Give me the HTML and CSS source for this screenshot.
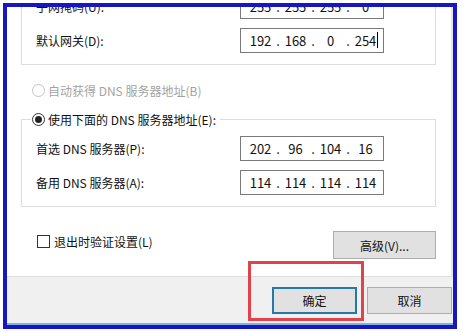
FILE: index.html
```html
<!DOCTYPE html>
<html>
  <head>
    <title>Internet 协议版本 4 (TCP/IPv4) 属性</title>
    <link rel="stylesheet" href="styles.css">
  </head>
  <body>
    <div class="frame">
      <div class="content">
        <!-- manual IP group, top is scrolled out of view -->
        <div class="group top-group">
          <div class="row">
            <span class="label">子网掩码(U):</span>
            <div class="ip-box">
              <span class="seg">255</span><span class="dot">.</span>
              <span class="seg">255</span><span class="dot">.</span>
              <span class="seg">255</span><span class="dot">.</span>
              <span class="seg">0</span>
            </div>
          </div>
          <div class="row">
            <span class="label">默认网关(D):</span>
            <div class="ip-box">
              <span class="seg">192</span><span class="dot">.</span>
              <span class="seg">168</span><span class="dot">.</span>
              <span class="seg">0</span><span class="dot">.</span>
              <span class="seg">254<i class="caret"></i></span>
            </div>
          </div>
        </div>

        <div class="radio-row disabled">
          <span class="radio"></span>
          <span>自动获得 DNS 服务器地址(B)</span>
        </div>

        <fieldset class="group dns-group">
          <legend class="radio-row">
            <span class="radio checked"></span>
            <span>使用下面的 DNS 服务器地址(E):</span>
          </legend>
          <div class="row">
            <span class="label">首选 DNS 服务器(P):</span>
            <div class="ip-box">
              <span class="seg">202</span><span class="dot">.</span>
              <span class="seg">96</span><span class="dot">.</span>
              <span class="seg">104</span><span class="dot">.</span>
              <span class="seg">16</span>
            </div>
          </div>
          <div class="row">
            <span class="label">备用 DNS 服务器(A):</span>
            <div class="ip-box">
              <span class="seg">114</span><span class="dot">.</span>
              <span class="seg">114</span><span class="dot">.</span>
              <span class="seg">114</span><span class="dot">.</span>
              <span class="seg">114</span>
            </div>
          </div>
        </fieldset>

        <div class="options">
          <label class="check-row">
            <span class="checkbox"></span>
            <span>退出时验证设置(L)</span>
          </label>
          <button class="btn btn-advanced">高级(V)...</button>
        </div>
      </div>

      <div class="footer">
        <button class="btn btn-ok">确定</button>
        <button class="btn">取消</button>
      </div>

      <!-- red highlight drawn over the OK button -->
      <div class="highlight"></div>
    </div>
  </body>
</html>
```

FILE: styles.css
```css
  * {
    box-sizing: border-box;
  }

  body {
    margin: 0;
    background: #fff;
    font-family: "Noto Sans CJK SC", "Microsoft YaHei", sans-serif;
    font-size: 12px;
    color: #111;
  }

  /* Blue frame around the dialog */
  .frame {
    position: relative;
    margin: 3px 0 0 3px;
    width: 454px;
    height: 326px;
    border: 4px solid #1616c2;
    overflow: hidden;
    display: flex;
    flex-direction: column;
  }

  .content {
    height: 269px;
    padding: 0 15px 0 14px;
    background: #fff;
    border-right: 2px solid #e6e6e6;
  }

  /* Group boxes */
  .group {
    border: 1px solid #dcdcdc;
  }

  .top-group {
    margin-top: -30px;
    padding: 16px 0 11px 14px;
  }

  .row {
    display: flex;
    align-items: center;
    height: 25px;
  }

  .row + .row {
    margin-top: 9px;
  }

  .label {
    width: 204px;
  }

  .ip-box {
    display: flex;
    align-items: center;
    width: 144px;
    height: 25px;
    padding-left: 4px;
    border: 1px solid #7a7a7a;
    font-size: 13px;
    line-height: 1;
  }

  .seg {
    position: relative;
    width: 31px;
    text-align: center;
  }

  .dot {
    width: 4px;
    text-align: center;
  }

  .caret {
    position: absolute;
    top: -2px;
    right: 3px;
    width: 1px;
    height: 16px;
    background: #000;
  }

  /* Radio rows */
  .radio-row {
    display: flex;
    align-items: center;
    gap: 3px;
    height: 16px;
  }

  .content > .radio-row {
    margin: 17px 0 0 11px;
  }

  .radio-row.disabled {
    color: #a3a3a3;
  }

  .radio {
    position: relative;
    width: 13px;
    height: 13px;
    border: 1px solid #333;
    border-radius: 50%;
    background: #fff;
  }

  .disabled .radio {
    border-color: #c4c4c4;
  }

  .radio.checked::after {
    content: "";
    position: absolute;
    left: 2px;
    top: 2px;
    width: 7px;
    height: 7px;
    border-radius: 50%;
    background: #222;
  }

  .dns-group {
    margin: 13px 0 0;
    padding: 9px 0 11px 14px;
    min-width: 0;
  }

  .dns-group legend {
    margin-left: -5px;
    padding: 0 4px 0 1px;
  }

  /* Checkbox + advanced */
  .options {
    display: flex;
    justify-content: space-between;
    align-items: flex-start;
    margin-top: 24px;
    padding-left: 16px;
  }

  .check-row {
    display: flex;
    align-items: center;
    gap: 4px;
    margin-top: 2px;
  }

  .checkbox {
    width: 13px;
    height: 13px;
    border: 1px solid #333;
    background: #fff;
  }

  .btn {
    font-family: inherit;
    font-size: 12px;
    color: #111;
    background: #e1e1e1;
    border: 1px solid #adadad;
    padding: 0;
  }

  .btn-advanced {
    width: 103px;
    height: 28px;
  }

  /* Bottom button bar */
  .footer {
    flex: 1;
    display: flex;
    justify-content: flex-end;
    gap: 10px;
    padding: 10px 1px 0 0;
    background: #f0f0f0;
    border-top: 1px solid #dfdfdf;
    border-bottom: 2px solid #7fb1e6;
  }

  .footer .btn {
    width: 85px;
    height: 27px;
  }

  .footer .btn-ok {
    border: 2px solid #2479a9;
  }

  .highlight {
    position: absolute;
    left: 241px;
    top: 254px;
    width: 116px;
    height: 60px;
    border: 3px solid #e0444a;
  }
```
